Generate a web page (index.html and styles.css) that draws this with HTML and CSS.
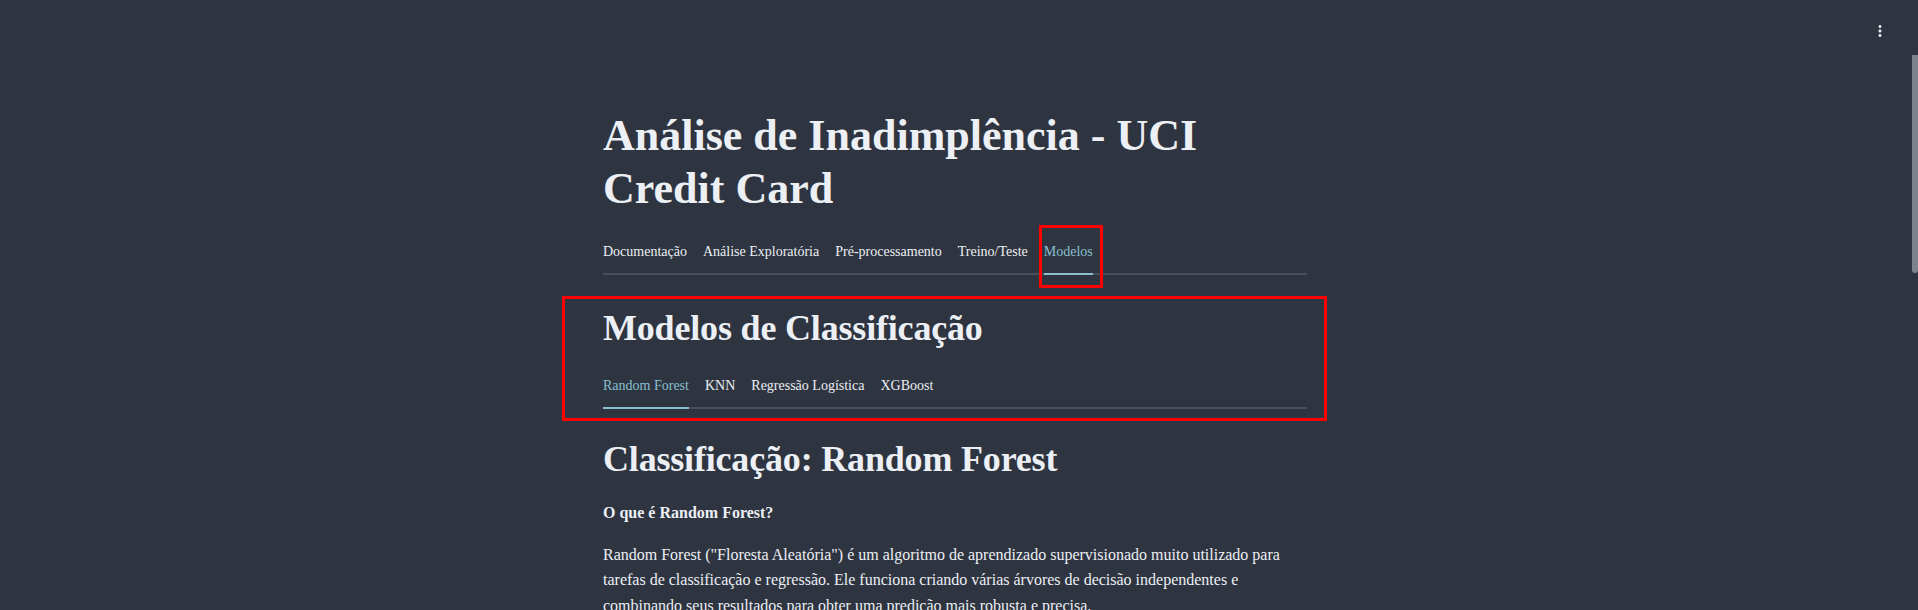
FILE: index.html
```html
<!DOCTYPE html>
<html lang="pt">
<head>
<meta charset="utf-8">
<title>Análise de Inadimplência - UCI Credit Card</title>
<link rel="stylesheet" href="styles.css">
</head>
<body>
<header class="toolbar">
  <button class="menu-btn" aria-label="Menu">
    <svg width="18" height="18" viewBox="0 0 24 24"><path fill="#eceff4" d="M12 8c1.1 0 2-.9 2-2s-.9-2-2-2-2 .9-2 2 .9 2 2 2zm0 2c-1.1 0-2 .9-2 2s.9 2 2 2 2-.9 2-2-.9-2-2-2zm0 6c-1.1 0-2 .9-2 2s.9 2 2 2 2-.9 2-2-.9-2-2-2z"/></svg>
  </button>
</header>
<div class="scroll-thumb"></div>
<main class="app">
  <div class="block">
    <h1 class="title">Análise de Inadimplência - UCI Credit Card</h1>
    <nav class="tabs main-tabs">
      <span class="tab">Documentação</span>
      <span class="tab">Análise Exploratória</span>
      <span class="tab">Pré-processamento</span>
      <span class="tab">Treino/Teste</span>
      <span class="tab active marked">Modelos</span>
    </nav>
    <section class="models marked-section">
      <h2 class="h2 first">Modelos de Classificação</h2>
      <nav class="tabs sub-tabs">
        <span class="tab active">Random Forest</span>
        <span class="tab">KNN</span>
        <span class="tab">Regressão Logística</span>
        <span class="tab">XGBoost</span>
      </nav>
    </section>
    <h2 class="h2 second">Classificação: Random Forest</h2>
    <p class="lead"><strong>O que é Random Forest?</strong></p>
    <p class="text">Random Forest ("Floresta Aleatória") é um algoritmo de aprendizado supervisionado muito utilizado para tarefas de classificação e regressão. Ele funciona criando várias árvores de decisão independentes e combinando seus resultados para obter uma predição mais robusta e precisa.</p>
  </div>
</main>
</body>
</html>
```

FILE: styles.css
```css
html, body {
  margin: 0;
  padding: 0;
  height: 100%;
  overflow: hidden;
  background: #2e3440;
}

body {
  font-family: "Liberation Serif", "Times New Roman", serif;
  color: #eceff4;
}

.toolbar {
  position: fixed;
  top: 0;
  right: 0;
  width: 100%;
  height: 0;
}

.menu-btn {
  position: absolute;
  top: 22px;
  left: 1871px;
  width: 18px;
  height: 18px;
  padding: 0;
  border: 0;
  background: transparent;
  display: flex;
}

.scroll-thumb {
  position: fixed;
  top: 55px;
  right: 0;
  width: 6px;
  height: 218px;
  background: #7d838b;
  border-radius: 0 0 3px 3px;
}

.app {
  padding-right: 8px;
}

.block {
  max-width: 704px;
  margin: 0 auto;
  padding-top: 110px;
}

.title {
  margin: 0;
  font-size: 44px;
  line-height: 52.8px;
  font-weight: 700;
  color: #eceff4;
}

.tabs {
  display: flex;
  gap: 16px;
  border-bottom: 2px solid #4a505b;
  font-size: 14px;
  line-height: 22px;
}

.tab {
  position: relative;
  padding-bottom: 10px;
  margin-bottom: -2px;
  border-bottom: 2px solid transparent;
  color: #eceff4;
  white-space: nowrap;
}

.tab.active {
  color: #88c0d0;
  border-bottom-color: #88c0d0;
}

.main-tabs {
  margin-top: 25px;
}

.marked::after {
  content: "";
  position: absolute;
  left: -5px;
  right: -10px;
  top: -16px;
  bottom: -15px;
  border: 3px solid #ff0000;
}

.models {
  position: relative;
  margin-top: 32px;
}

.marked-section::after {
  content: "";
  position: absolute;
  left: -41px;
  right: -20px;
  top: -11px;
  bottom: -12px;
  border: 3px solid #ff0000;
  pointer-events: none;
}

.h2 {
  margin: 0;
  font-size: 36px;
  line-height: 43.2px;
  font-weight: 700;
  letter-spacing: -0.18px;
  color: #eceff4;
}

.sub-tabs {
  margin-top: 25.5px;
}

.h2.second {
  margin-top: 29px;
}

.lead,
.text {
  margin: 0;
  font-size: 16px;
  line-height: 25.6px;
}

.lead {
  margin-top: 18px;
}

.text {
  margin-top: 16.5px;
}
```
